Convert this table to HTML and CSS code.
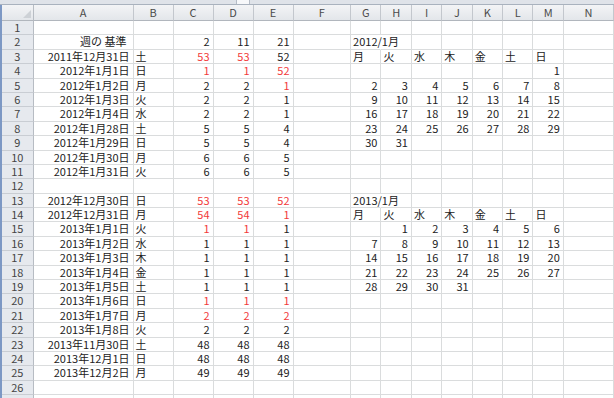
FILE: index.html
```html
<!DOCTYPE html>
<html lang="ja">
<head>
<meta charset="utf-8">
<title>週の基準</title>
<link rel="stylesheet" href="styles.css">
</head>
<body>
<div class="app">
  <div class="top"><div class="fbox"></div></div>
  <div class="main">
    <div class="edge"></div>
    <div class="sheet">
      <div class="row hd"><span class="corner"></span><span>A</span><span>B</span><span>C</span><span>D</span><span>E</span><span>F</span><span>G</span><span>H</span><span>I</span><span>J</span><span>K</span><span>L</span><span>M</span><span>N</span></div>
      <div class="row"><span class="h">1</span><span></span><span></span><span></span><span></span><span></span><span></span><span></span><span></span><span></span><span></span><span></span><span></span><span></span><span></span></div>
      <div class="row"><span class="h">2</span><span class="t">週の 基準</span><span></span><span>2</span><span>11</span><span>21</span><span></span><span class="l ov">2012/1月</span><span></span><span></span><span></span><span></span><span></span><span></span><span></span></div>
      <div class="row"><span class="h">3</span><span>2011年12月31日</span><span class="l">土</span><span class="r">53</span><span class="r">53</span><span>52</span><span></span><span class="l">月</span><span class="l">火</span><span class="l">水</span><span class="l">木</span><span class="l">金</span><span class="l">土</span><span class="l">日</span><span></span></div>
      <div class="row"><span class="h">4</span><span>2012年1月1日</span><span class="l">日</span><span class="r">1</span><span class="r">1</span><span class="r">52</span><span></span><span></span><span></span><span></span><span></span><span></span><span></span><span>1</span><span></span></div>
      <div class="row"><span class="h">5</span><span>2012年1月2日</span><span class="l">月</span><span>2</span><span>2</span><span class="r">1</span><span></span><span>2</span><span>3</span><span>4</span><span>5</span><span>6</span><span>7</span><span>8</span><span></span></div>
      <div class="row"><span class="h">6</span><span>2012年1月3日</span><span class="l">火</span><span>2</span><span>2</span><span>1</span><span></span><span>9</span><span>10</span><span>11</span><span>12</span><span>13</span><span>14</span><span>15</span><span></span></div>
      <div class="row"><span class="h">7</span><span>2012年1月4日</span><span class="l">水</span><span>2</span><span>2</span><span>1</span><span></span><span>16</span><span>17</span><span>18</span><span>19</span><span>20</span><span>21</span><span>22</span><span></span></div>
      <div class="row"><span class="h">8</span><span>2012年1月28日</span><span class="l">土</span><span>5</span><span>5</span><span>4</span><span></span><span>23</span><span>24</span><span>25</span><span>26</span><span>27</span><span>28</span><span>29</span><span></span></div>
      <div class="row"><span class="h">9</span><span>2012年1月29日</span><span class="l">日</span><span>5</span><span>5</span><span>4</span><span></span><span>30</span><span>31</span><span></span><span></span><span></span><span></span><span></span><span></span></div>
      <div class="row"><span class="h">10</span><span>2012年1月30日</span><span class="l">月</span><span>6</span><span>6</span><span>5</span><span></span><span></span><span></span><span></span><span></span><span></span><span></span><span></span><span></span></div>
      <div class="row"><span class="h">11</span><span>2012年1月31日</span><span class="l">火</span><span>6</span><span>6</span><span>5</span><span></span><span></span><span></span><span></span><span></span><span></span><span></span><span></span><span></span></div>
      <div class="row"><span class="h">12</span><span></span><span></span><span></span><span></span><span></span><span></span><span></span><span></span><span></span><span></span><span></span><span></span><span></span><span></span></div>
      <div class="row"><span class="h">13</span><span>2012年12月30日</span><span class="l">日</span><span class="r">53</span><span class="r">53</span><span class="r">52</span><span></span><span class="l ov">2013/1月</span><span></span><span></span><span></span><span></span><span></span><span></span><span></span></div>
      <div class="row"><span class="h">14</span><span>2012年12月31日</span><span class="l">月</span><span class="r">54</span><span class="r">54</span><span class="r">1</span><span></span><span class="l">月</span><span class="l">火</span><span class="l">水</span><span class="l">木</span><span class="l">金</span><span class="l">土</span><span class="l">日</span><span></span></div>
      <div class="row"><span class="h">15</span><span>2013年1月1日</span><span class="l">火</span><span class="r">1</span><span class="r">1</span><span>1</span><span></span><span></span><span>1</span><span>2</span><span>3</span><span>4</span><span>5</span><span>6</span><span></span></div>
      <div class="row"><span class="h">16</span><span>2013年1月2日</span><span class="l">水</span><span>1</span><span>1</span><span>1</span><span></span><span>7</span><span>8</span><span>9</span><span>10</span><span>11</span><span>12</span><span>13</span><span></span></div>
      <div class="row"><span class="h">17</span><span>2013年1月3日</span><span class="l">木</span><span>1</span><span>1</span><span>1</span><span></span><span>14</span><span>15</span><span>16</span><span>17</span><span>18</span><span>19</span><span>20</span><span></span></div>
      <div class="row"><span class="h">18</span><span>2013年1月4日</span><span class="l">金</span><span>1</span><span>1</span><span>1</span><span></span><span>21</span><span>22</span><span>23</span><span>24</span><span>25</span><span>26</span><span>27</span><span></span></div>
      <div class="row"><span class="h">19</span><span>2013年1月5日</span><span class="l">土</span><span>1</span><span>1</span><span>1</span><span></span><span>28</span><span>29</span><span>30</span><span>31</span><span></span><span></span><span></span><span></span></div>
      <div class="row"><span class="h">20</span><span>2013年1月6日</span><span class="l">日</span><span class="r">1</span><span class="r">1</span><span class="r">1</span><span></span><span></span><span></span><span></span><span></span><span></span><span></span><span></span><span></span></div>
      <div class="row"><span class="h">21</span><span>2013年1月7日</span><span class="l">月</span><span class="r">2</span><span class="r">2</span><span class="r">2</span><span></span><span></span><span></span><span></span><span></span><span></span><span></span><span></span><span></span></div>
      <div class="row"><span class="h">22</span><span>2013年1月8日</span><span class="l">火</span><span>2</span><span>2</span><span>2</span><span></span><span></span><span></span><span></span><span></span><span></span><span></span><span></span><span></span></div>
      <div class="row"><span class="h">23</span><span>2013年11月30日</span><span class="l">土</span><span>48</span><span>48</span><span>48</span><span></span><span></span><span></span><span></span><span></span><span></span><span></span><span></span><span></span></div>
      <div class="row"><span class="h">24</span><span>2013年12月1日</span><span class="l">日</span><span>48</span><span>48</span><span>48</span><span></span><span></span><span></span><span></span><span></span><span></span><span></span><span></span><span></span></div>
      <div class="row"><span class="h">25</span><span>2013年12月2日</span><span class="l">月</span><span>49</span><span>49</span><span>49</span><span></span><span></span><span></span><span></span><span></span><span></span><span></span><span></span><span></span></div>
      <div class="row"><span class="h">26</span><span></span><span></span><span></span><span></span><span></span><span></span><span></span><span></span><span></span><span></span><span></span><span></span><span></span><span></span></div>
      <div class="row"><span class="h">27</span><span></span><span></span><span></span><span></span><span></span><span></span><span></span><span></span><span></span><span></span><span></span><span></span><span></span><span></span></div>
    </div>
  </div>
</div>
</body>
</html>
```

FILE: styles.css
```css
* { box-sizing: border-box; margin: 0; padding: 0; }
html, body { width: 614px; height: 398px; overflow: hidden; background: #fff; }
body {
  font-family: "Noto Sans CJK JP", "Noto Sans", sans-serif;
  font-size: 11px;
  color: #222;
}
.app { display: flex; flex-direction: column; height: 398px; }
.top {
  height: 5px;
  background: #dfe3e9;
  border-bottom: 1px solid #a9b2be;
  position: relative;
  flex: none;
}
.fbox {
  position: absolute;
  left: 236px;
  top: 0;
  width: 14px;
  height: 4px;
  background: #f7f8fa;
  border-left: 1px solid #b5bcc6;
  border-right: 1px solid #b5bcc6;
}
.main { display: flex; flex: 1; min-height: 0; }
.edge { width: 2px; background: #7d98c4; flex: none; }
.sheet { flex: 1; display: flex; flex-direction: column; }
.row {
  display: grid;
  grid-template-columns: 31.5px 100px 40px 40px 40px 40px 57.6px repeat(7, 30.4px) 1fr;
  height: 14.4px;
  flex: none;
}
.row > span {
  border-right: 1px solid #dadcdd;
  border-bottom: 1px solid #dadcdd;
  text-align: right;
  padding-right: 3px;
  line-height: 13px;
  white-space: nowrap;
}
.row > span.l { text-align: left; padding-left: 2px; padding-right: 0; }
.row > span.ov { border-right-color: transparent; }
.row > span.r { color: #f23a3a; }
.row > span.t { padding-right: 6px; }
.row > span.h {
  background: #e6e9ee;
  border-right: 1px solid #b7bcc3;
  border-bottom: 1px solid #c9cdd3;
  text-align: center;
  padding: 0;
  color: #444;
}
.hd { height: 16px; }
.hd > span {
  background: linear-gradient(#f3f4f6, #e3e6ea);
  border-right: 1px solid #c3c7cd;
  border-bottom: 1px solid #b1b6bd;
  text-align: center;
  padding: 0;
  line-height: 15px;
  color: #4a4a4a;
}
.hd > span.corner {
  position: relative;
  border-right-color: #b7bcc3;
}
.hd > span.corner::after {
  content: "";
  position: absolute;
  right: 2px;
  bottom: 2px;
  border-style: solid;
  border-width: 0 0 8px 8px;
  border-color: transparent transparent #cdd1d6 transparent;
}
```
